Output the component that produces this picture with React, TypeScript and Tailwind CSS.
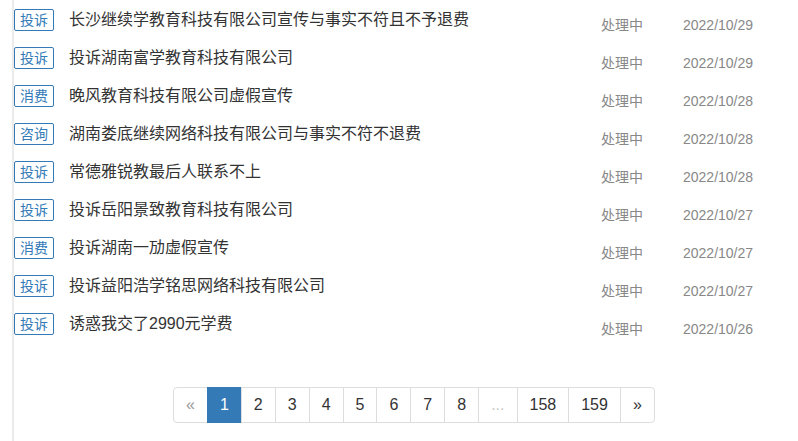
import React from "react";

// 列表数据
const items = [
  { tag: "投诉", title: "长沙继续学教育科技有限公司宣传与事实不符且不予退费", date: "2022/10/29" },
  { tag: "投诉", title: "投诉湖南富学教育科技有限公司", date: "2022/10/29" },
  { tag: "消费", title: "晚风教育科技有限公司虚假宣传", date: "2022/10/28" },
  { tag: "咨询", title: "湖南娄底继续网络科技有限公司与事实不符不退费", date: "2022/10/28" },
  { tag: "投诉", title: "常德雅锐教最后人联系不上", date: "2022/10/28" },
  { tag: "投诉", title: "投诉岳阳景致教育科技有限公司", date: "2022/10/27" },
  { tag: "消费", title: "投诉湖南一劢虚假宣传", date: "2022/10/27" },
  { tag: "投诉", title: "投诉益阳浩学铭思网络科技有限公司", date: "2022/10/27" },
  { tag: "投诉", title: "诱惑我交了2990元学费", date: "2022/10/26" },
];

const pages = ["1", "2", "3", "4", "5", "6", "7", "8", "...", "158", "159"];

export default function App() {
  return (
    <div
      className="w-[798px] h-[441px] bg-white overflow-hidden"
      style={{ fontFamily: '"Liberation Sans", "Noto Sans CJK SC", sans-serif' }}
    >
      <div className="ml-[12px] h-full border-l-2 border-[#ebebeb] pt-px">
        {/* 投诉列表 */}
        <ul>
          {items.map((it, i) => (
            <li key={i} className="flex items-center h-[38px]">
              <span className="w-[40px] h-[22px] flex items-center justify-center border border-[#337ab7] rounded-[2px] text-[14px] leading-none text-[#337ab7]">
                {it.tag}
              </span>
              <span className="ml-[15px] w-[532px] text-[16px] leading-[22px] text-[#333] whitespace-nowrap">
                {it.title}
              </span>
              <span className="mt-[9px] w-[82px] text-[14px] leading-[20px] text-[#888]">处理中</span>
              <span className="mt-[9px] text-[14px] leading-[20px] text-[#888]">{it.date}</span>
            </li>
          ))}
        </ul>

        {/* 分页 */}
        <div className="mt-[44px] pl-[159px] flex">
          <span className="px-[12px] py-[6px] text-[16px] leading-[22px] border border-[#ddd] rounded-l-[4px] text-[#999]">
            «
          </span>
          {pages.map((p) => (
            <span
              key={p}
              className={
                p === "1"
                  ? "-ml-px px-[12px] py-[6px] text-[16px] leading-[22px] border border-[#337ab7] bg-[#337ab7] text-white"
                  : p === "..."
                  ? "-ml-px px-[12px] py-[6px] text-[16px] leading-[22px] border border-[#ddd] text-[#c8c8c8]"
                  : "-ml-px px-[12px] py-[6px] text-[16px] leading-[22px] border border-[#ddd] text-[#333]"
              }
            >
              {p}
            </span>
          ))}
          <span className="-ml-px px-[12px] py-[6px] text-[16px] leading-[22px] border border-[#ddd] rounded-r-[4px] text-[#333]">
            »
          </span>
        </div>
      </div>
    </div>
  );
}
